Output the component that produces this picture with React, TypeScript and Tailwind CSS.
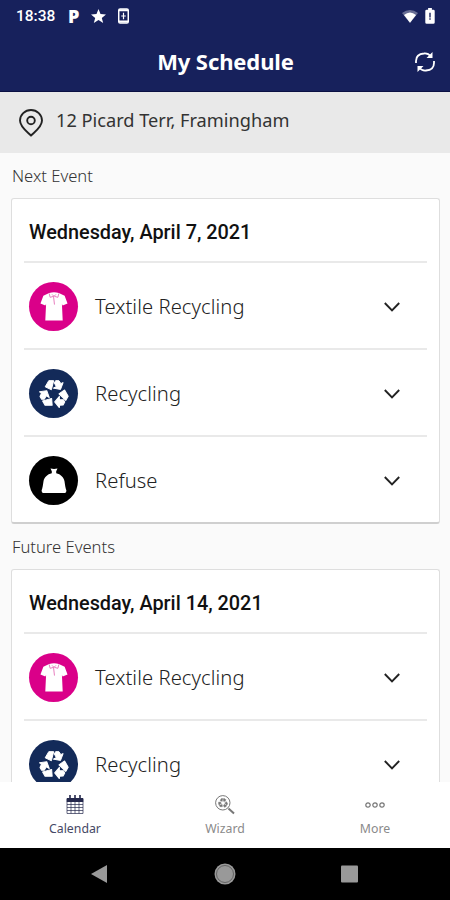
import React from 'react';

type EventKind = 'textile' | 'recycling' | 'refuse';

interface ScheduleDay {
  date: string;
  events: EventKind[];
}

const nextDay: ScheduleDay = {
  date: 'Wednesday, April 7, 2021',
  events: ['textile', 'recycling', 'refuse']
};

const futureDay: ScheduleDay = {
  date: 'Wednesday, April 14, 2021',
  events: ['textile', 'recycling']
};

const kinds = {
  textile: { label: 'Textile Recycling', color: 'bg-[#da0089]', icon: <ShirtIcon /> },
  recycling: { label: 'Recycling', color: 'bg-[#132a59]', icon: <RecycleIcon size={30} /> },
  refuse: { label: 'Refuse', color: 'bg-black', icon: <BagIcon /> }
};

function ShirtIcon() {
  return (
    <svg width="28" height="29" viewBox="0 0 28 30">
      <path d="M9 1Q14-.4 19 1l6 3 3 8-5 2-.8-1.500L23 29.500H5l.8-17L5 14l-5-2 3-8z" fill="#fff" />
      <path d="M9 1.500l1 4 3.500-1L14.500 13M19 1.500L18 5.500l-3.500-1M12 2.500l2 2 2-2" fill="none" stroke="#e36bb5" strokeWidth=".9" />
    </svg>
  );
}

// one folded arrow, repeated every 120 degrees
function RecycleIcon({ size }: { size: number }) {
  return (
    <svg width={size} height={size} viewBox="-46 -46 92 92" fill="currentColor" stroke="currentColor" strokeWidth="3" strokeLinejoin="round">
      {[0, 120, 240].map(angle => (
        <g key={angle} transform={`rotate(${angle})`}>
          <path d="M-27-22L-16-41H-1L-8-13z" />
          <path d="M5-41H15L21-32 28-35 20-14-2-18 7-23 1-34z" />
        </g>
      ))}
    </svg>
  );
}

function BagIcon() {
  return (
    <svg width="26" height="26" viewBox="0 0 26 26" fill="#fff">
      <path d="M9.500 .5l3.500.6 3.500-.6-1.300 2.800v2c4.500 1 7.600 4 8.300 8 .5 3.400.9 6.700 1.900 9.200q0 2-1.400 2.500H2Q.6 24.500.6 22.500c1-2.500 1.400-5.800 1.900-9.200.7-4 3.800-7 8.300-8v-2z" />
    </svg>
  );
}

function StatusBar() {
  return (
    <div className="flex h-8 items-center pl-4 pr-[15px] text-white">
      <span className="w-[52px] pt-px font-['Roboto',sans-serif] text-[15.500px] font-medium leading-none">18:38</span>
      <span className="w-[23px] font-['Noto_Sans',sans-serif] text-[18px] font-black leading-none">P</span>
      <svg className="mr-3" width="15" height="14" viewBox="0 0 15 14" fill="#fff">
        <path d="M7.500 0l2 5 5.500.4-4.200 3.500 1.400 5.100-4.700-2.900L2.800 14l1.400-5.100L0 5.400 5.500 5z" />
      </svg>
      <svg width="11" height="16" viewBox="0 0 12 17">
        <rect x=".8" y=".8" width="10.400" height="15.400" rx="1.500" fill="none" stroke="#fff" strokeWidth="1.600" />
        <path d="M1 2.200h10M1 14.500h10" stroke="#fff" strokeWidth="2.400" />
        <path d="M6 5v7M3.500 8.500h5" stroke="#fff" strokeWidth="1.300" />
      </svg>
      <div className="grow" />
      <svg className="mr-[7px]" width="16" height="13" viewBox="0 0 16 13">
        <path d="M0 3Q8-3 16 3L8 13z" fill="#fff" opacity=".35" />
        <path d="M2 5Q8 0 14 5L8 12.800z" fill="#fff" />
      </svg>
      <svg width="10" height="16" viewBox="0 0 10 17">
        <path d="M3 0h4v1.800h1.500q1.500 0 1.500 1.500v12q0 1.500-1.500 1.500h-7Q0 16.800 0 15.300v-12q0-1.500 1.500-1.500H3z" fill="#fff" />
        <path d="M5 5v5M5 11v1.500" stroke="#17215c" strokeWidth="1.500" />
      </svg>
    </div>
  );
}

function Header() {
  return (
    <div className="relative flex h-[60px] items-center justify-center text-white">
      <h1 className="pb-0.5 pl-px font-['Noto_Sans',sans-serif] text-[22px] font-bold leading-none tracking-[-0.1px]">My Schedule</h1>
      <svg className="absolute right-[15px] top-[20px]" width="20" height="20" viewBox="0 0 20 20" fill="none" stroke="#fff" strokeWidth="1.800">
        <path d="M1 11V9Q1 2 9 1.500q4-.5 7 3M19 9v2q0 7-8 7.500-4 .5-7-3" />
        <path d="M17.500 0v6h-6zM2.500 20v-6h6z" fill="#fff" stroke="none" />
      </svg>
    </div>
  );
}

function EventRow({ kind }: { kind: EventKind }) {
  const { label, color, icon } = kinds[kind];
  return (
    <div className="mx-[12px] flex h-[87px] items-center border-t-2 border-[#e9e9e9] pl-[5px] pr-[27px] pt-[2px]">
      <div className={`flex size-[49px] items-center justify-center rounded-full text-white ${color}`}>
        {icon}
      </div>
      <span className="ml-[17px] grow pb-px font-['Noto_Sans',sans-serif] text-[20.200px] font-light leading-[26px] tracking-[0.07px] text-[#222]">{label}</span>
      <svg width="16" height="10" viewBox="0 0 16 10" fill="none" stroke="#222" strokeWidth="1.900">
        <path d="M.8 1L8 8.300 15.200 1" />
      </svg>
    </div>
  );
}

function DayCard({ day }: { day: ScheduleDay }) {
  return (
    <div className="ml-[11px] mr-[10px] shrink-0 rounded-[3px] border border-b-2 border-[#dedede] border-b-[#cfcfcf] bg-white">
      <div className="flex h-[62px] items-center pl-[17px] pt-[5px] font-['Roboto',sans-serif] text-[19.850px] font-medium text-[#111]">
        {day.date}
      </div>
      {day.events.map(kind => (
        <EventRow key={kind} kind={kind} />
      ))}
    </div>
  );
}

function SectionLabel({ children }: { children: React.ReactNode }) {
  return (
    <h2 className="flex h-[45px] shrink-0 items-center pl-3 pt-px font-['Noto_Sans',sans-serif] text-[16.600px] font-light text-[#333]">
      {children}
    </h2>
  );
}

function CalendarIcon() {
  return (
    <svg width="18" height="20" viewBox="0 0 18 20" fill="none" stroke="#25294d">
      <path d="M1 3.500h16v3H1z" fill="#25294d" />
      <path d="M4 0v5M9 0v5M14 0v5" strokeWidth="1.600" />
      <path d="M1 6h16v12.500H1zM1 9.500h16M1 12.500h16M1 15.500h16M5 6v12.500M9 6v12.500M13 6v12.500" strokeWidth=".7" />
    </svg>
  );
}

function WizardIcon() {
  return (
    <div className="relative size-5 text-[#777]">
      <svg width="20" height="20" viewBox="0 0 20 20" fill="none" stroke="currentColor">
        <circle cx="7.800" cy="7.800" r="7.200" />
        <path d="M13.500 13.500l5.500 5" strokeWidth="2" />
      </svg>
      <div className="absolute left-[3px] top-[3px]">
        <RecycleIcon size={10} />
      </div>
    </div>
  );
}

function MoreIcon() {
  return (
    <svg width="20" height="8" viewBox="0 0 20 8" fill="none" stroke="#777" strokeWidth="1.200">
      <circle cx="3" cy="4" r="2.200" />
      <circle cx="10" cy="4" r="2.200" />
      <circle cx="17" cy="4" r="2.200" />
    </svg>
  );
}

const tabs = [
  { label: 'Calendar', icon: <CalendarIcon />, color: 'text-[#454865]' },
  { label: 'Wizard', icon: <WizardIcon />, color: 'text-[#8a8a8a]' },
  { label: 'More', icon: <MoreIcon />, color: 'text-[#8a8a8a]' }
];

function TabBar() {
  return (
    <div className="grid h-[66px] shrink-0 grid-cols-3 bg-white">
      {tabs.map(tab => (
        <div key={tab.label} className={`flex flex-col items-center pt-[13px] ${tab.color}`}>
          <div className="flex h-5 items-center">{tab.icon}</div>
          <span className="mt-[5px] font-['Noto_Sans',sans-serif] text-[12.300px] leading-[18px]">{tab.label}</span>
        </div>
      ))}
    </div>
  );
}

function SystemBar() {
  return (
    <div className="flex h-[52px] shrink-0 items-center justify-center bg-black">
      <svg width="268" height="22" viewBox="0 0 268 22" fill="#999">
        <path d="M0 11L16 2v18z" />
        <circle cx="134" cy="11" r="10.500" />
        <circle cx="134" cy="11" r="8.500" fill="none" stroke="#555" strokeWidth=".8" />
        <rect x="250" y="2.500" width="17" height="17" rx="1" />
      </svg>
    </div>
  );
}

export default function App() {
  return (
    <div className="flex h-[900px] w-[450px] flex-col overflow-hidden bg-[#fafafa]">
      <div className="h-[92px] shrink-0 border-b border-[#0b1144] bg-[#17215c]">
        <StatusBar />
        <Header />
      </div>
      <div className="flex h-[61px] shrink-0 items-center bg-[#e9e9e9] pl-[19px]">
        <svg width="24" height="28" viewBox="0 0 24 28" fill="none" stroke="#222" strokeWidth="1.900">
          <path d="M12 26.500C8 22.500 1 18 1 11.500a11 10.500 0 0 1 22 0C23 18 16 22.500 12 26.500z" />
          <circle cx="12" cy="11.500" r="3.800" />
        </svg>
        <span className="ml-[13px] pb-[3px] font-['Noto_Sans',sans-serif] text-[18.200px] text-[#333]">12 Picard Terr, Framingham</span>
      </div>
      <div className="flex min-h-0 grow flex-col overflow-hidden">
        <SectionLabel>Next Event</SectionLabel>
        <DayCard day={nextDay} />
        <SectionLabel>Future Events</SectionLabel>
        <DayCard day={futureDay} />
      </div>
      <TabBar />
      <SystemBar />
    </div>
  );
}
